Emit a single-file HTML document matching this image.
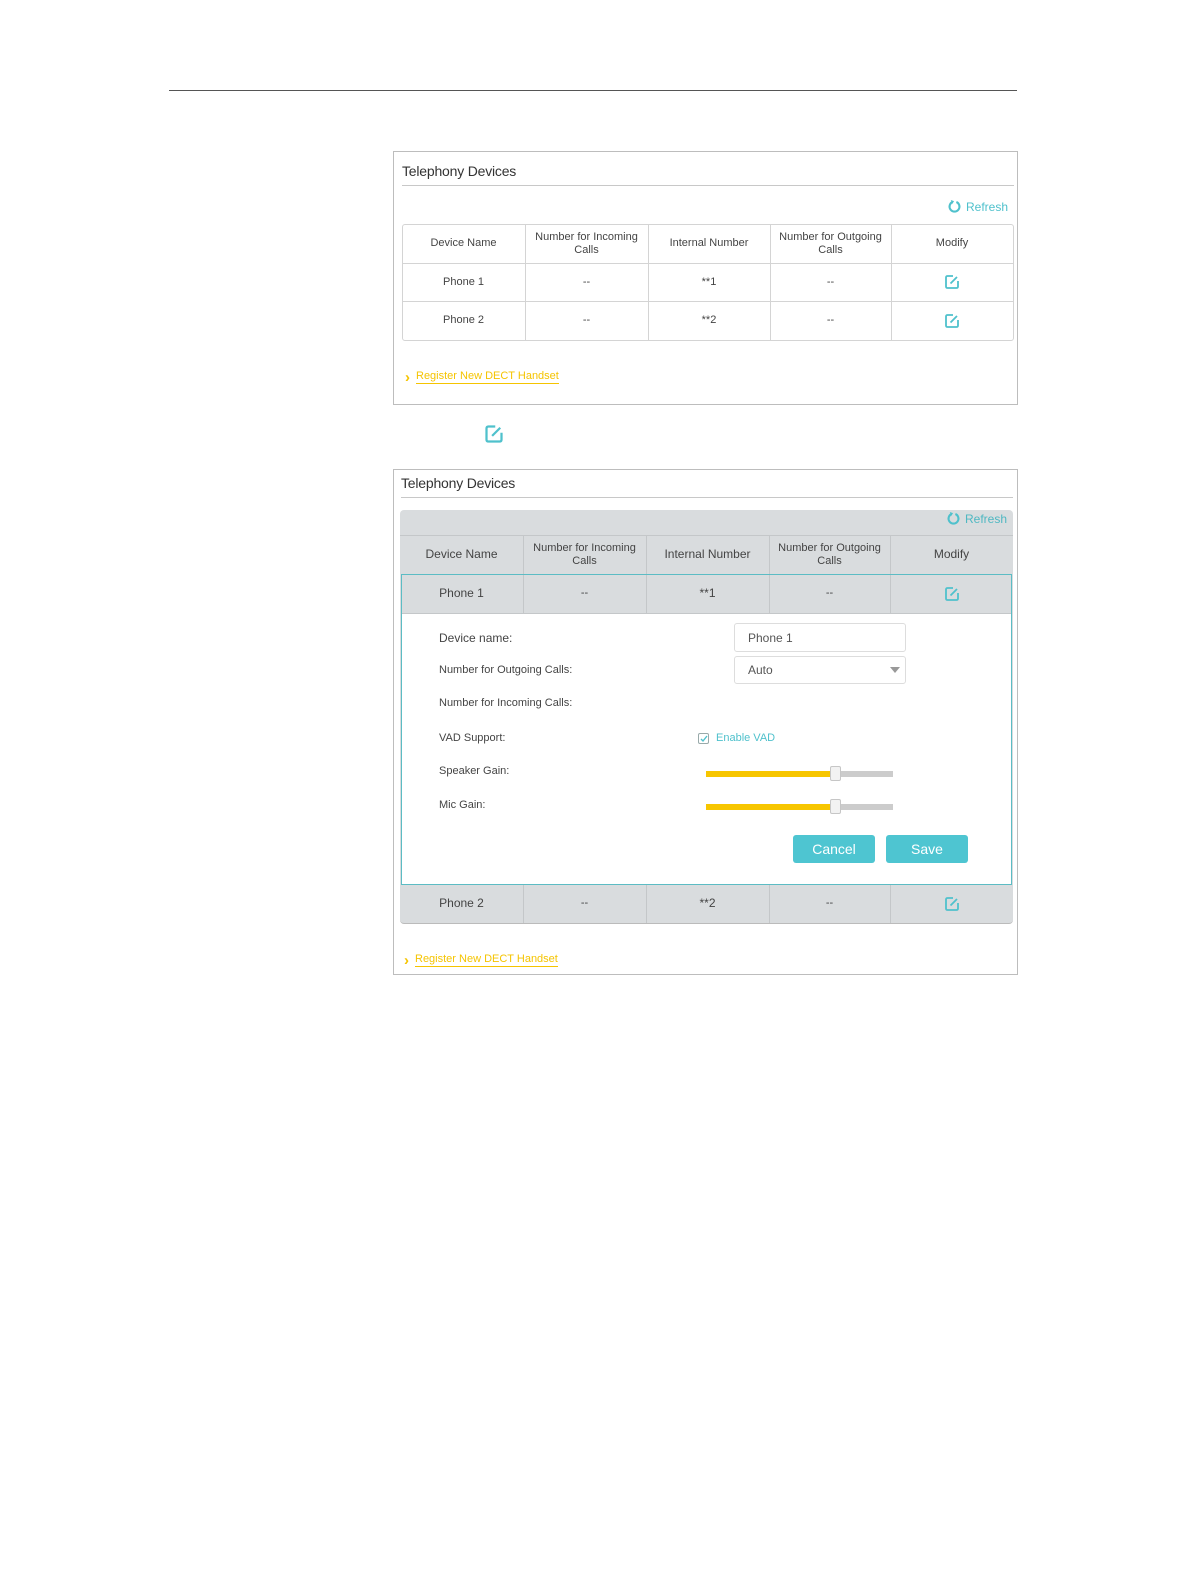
<!DOCTYPE html>
<html><head><meta charset="utf-8">
<style>
*{margin:0;padding:0;box-sizing:border-box}
body{width:1196px;height:1582px;background:#fff;position:relative;font-family:"Liberation Sans",Arial,sans-serif;color:#333;overflow:hidden}
.a{position:absolute}
.box{position:absolute;border:1px solid #bdbdbd;background:#fff}
.title{position:absolute;font-size:14px;color:#333;letter-spacing:-0.2px}
.ul{position:absolute;height:1px;background:#c8c8c8}
.ref{position:absolute;font-size:12px;color:#4fc1cc;display:flex;align-items:center;gap:4px}
.cell{position:absolute;display:flex;align-items:center;justify-content:center;text-align:center;font-size:11px;line-height:13px;color:#444}
.vl{position:absolute;width:1px;background:#d4d4d4}
.hl{position:absolute;height:1px;background:#d4d4d4}
.reg{position:absolute;font-size:11px;color:#f5c400;display:flex;align-items:center;gap:6px}
.reg b{font-size:15px;line-height:13px}
.reg span{border-bottom:1px solid #f5c400;line-height:13px}
.lbl{position:absolute;font-size:11px;color:#444}
.inp{position:absolute;border:1px solid #ddd;border-radius:3px;background:#fff;font-size:12px;color:#555;padding-left:13px;display:flex;align-items:center}
.btn{position:absolute;background:#4ec5d1;color:#fff;font-size:14px;border-radius:3px;display:flex;align-items:center;justify-content:center}
.track{position:absolute;height:6px;background:#ccc}
.fill{position:absolute;height:6px;background:#f7c600}
.knob{position:absolute;width:11px;height:15px;background:#f2f2f2;border:1px solid #c6c6c6;border-radius:2px}
</style></head><body>
<svg width="0" height="0" style="position:absolute"><defs>
<symbol id="ed" viewBox="0 0 16 16"><path d="M9 2H3.5Q2 2 2 3.5v9Q2 14 3.5 14h9q1.5 0 1.5-1.5V7" fill="none" stroke="#4fc1cc" stroke-width="1.8"/><path d="M6.5 9.5L13 3" stroke="#4fc1cc" stroke-width="1.8"/></symbol>
<symbol id="rf" viewBox="0 0 16 16"><path d="M6 3.2A5.3 5.3 0 1 0 10 3.2" fill="none" stroke="#4fc1cc" stroke-width="2.2"/><path d="M4 1l3.5 1.2-1.8 3z" fill="#4fc1cc"/></symbol>
</defs></svg>

<div class="a" style="left:169px;top:90px;width:848px;height:1px;background:#555"></div>

<div class="box" style="left:393px;top:151px;width:625px;height:254px"></div>
<div class="title" style="left:402px;top:163px">Telephony Devices</div>
<div class="ul" style="left:402px;top:185px;width:612px"></div>
<div class="ref" style="left:947px;top:199px"><svg width="15" height="15"><use href="#rf"/></svg>Refresh</div>
<div class="a" style="left:402px;top:224px;width:612px;height:117px;border:1px solid #d4d4d4;border-radius:3px"></div>
<div class="hl" style="left:402px;top:263px;width:612px"></div>
<div class="hl" style="left:402px;top:301px;width:612px"></div>
<div class="vl" style="left:525px;top:224px;height:117px"></div>
<div class="vl" style="left:648px;top:224px;height:117px"></div>
<div class="vl" style="left:770px;top:224px;height:117px"></div>
<div class="vl" style="left:891px;top:224px;height:117px"></div>
<div class="cell" style="left:402px;top:224px;width:123px;height:39px">Device Name</div>
<div class="cell" style="left:525px;top:224px;width:123px;height:39px">Number for Incoming<br>Calls</div>
<div class="cell" style="left:648px;top:224px;width:122px;height:39px">Internal Number</div>
<div class="cell" style="left:770px;top:224px;width:121px;height:39px">Number for Outgoing<br>Calls</div>
<div class="cell" style="left:891px;top:224px;width:122px;height:39px">Modify</div>
<div class="cell" style="left:402px;top:263px;width:123px;height:38px">Phone 1</div>
<div class="cell" style="left:525px;top:263px;width:123px;height:38px">--</div>
<div class="cell" style="left:648px;top:263px;width:122px;height:38px">**1</div>
<div class="cell" style="left:770px;top:263px;width:121px;height:38px">--</div>
<div class="cell" style="left:891px;top:263px;width:122px;height:38px"><svg width="16" height="16"><use href="#ed"/></svg></div>
<div class="cell" style="left:402px;top:301px;width:123px;height:39px">Phone 2</div>
<div class="cell" style="left:525px;top:301px;width:123px;height:39px">--</div>
<div class="cell" style="left:648px;top:301px;width:122px;height:39px">**2</div>
<div class="cell" style="left:770px;top:301px;width:121px;height:39px">--</div>
<div class="cell" style="left:891px;top:301px;width:122px;height:39px"><svg width="16" height="16"><use href="#ed"/></svg></div>
<div class="reg" style="left:405px;top:370px"><b>›</b><span>Register New DECT Handset</span></div>

<svg class="a" style="left:484px;top:424px" width="20" height="20"><use href="#ed"/></svg>

<div class="box" style="left:393px;top:469px;width:625px;height:506px"></div>
<div class="title" style="left:401px;top:475px">Telephony Devices</div>
<div class="ul" style="left:401px;top:497px;width:612px"></div>
<div class="a" style="left:400px;top:510px;width:613px;height:414px;background:#d9dcde;border-radius:4px;border-bottom:1px solid #bbb"></div>
<div class="ref" style="left:946px;top:511px;color:#4fb8c2"><svg width="15" height="15"><use href="#rf"/></svg>Refresh</div>
<div class="hl" style="left:400px;top:535px;width:613px;background:#c4c7c9"></div>
<div class="vl" style="left:523px;top:535px;height:39px;background:#c4c7c9"></div>
<div class="vl" style="left:646px;top:535px;height:39px;background:#c4c7c9"></div>
<div class="vl" style="left:769px;top:535px;height:39px;background:#c4c7c9"></div>
<div class="vl" style="left:890px;top:535px;height:39px;background:#c4c7c9"></div>
<div class="cell" style="left:400px;top:535px;width:123px;height:39px;font-size:12px">Device Name</div>
<div class="cell" style="left:523px;top:535px;width:123px;height:39px">Number for Incoming<br>Calls</div>
<div class="cell" style="left:646px;top:535px;width:123px;height:39px;font-size:12px">Internal Number</div>
<div class="cell" style="left:769px;top:535px;width:121px;height:39px">Number for Outgoing<br>Calls</div>
<div class="cell" style="left:890px;top:535px;width:123px;height:39px;font-size:12px">Modify</div>
<div class="a" style="left:401px;top:574px;width:611px;height:311px;border:1px solid #5cbcc4"></div>
<div class="a" style="left:402px;top:613px;width:609px;height:271px;background:#fff;border-top:1px solid #c4c7c9"></div>
<div class="vl" style="left:523px;top:575px;height:38px;background:#c4c7c9"></div>
<div class="vl" style="left:646px;top:575px;height:38px;background:#c4c7c9"></div>
<div class="vl" style="left:769px;top:575px;height:38px;background:#c4c7c9"></div>
<div class="vl" style="left:890px;top:575px;height:38px;background:#c4c7c9"></div>
<div class="cell" style="left:400px;top:574px;width:123px;height:39px;font-size:12px">Phone 1</div>
<div class="cell" style="left:523px;top:574px;width:123px;height:39px">--</div>
<div class="cell" style="left:646px;top:574px;width:123px;height:39px;font-size:12px">**1</div>
<div class="cell" style="left:769px;top:574px;width:121px;height:39px">--</div>
<div class="cell" style="left:890px;top:574px;width:123px;height:39px"><svg width="16" height="16"><use href="#ed"/></svg></div>

<div class="lbl" style="left:439px;top:631px;font-size:12px">Device name:</div>
<div class="lbl" style="left:439px;top:664px">Number for Outgoing Calls:</div>
<div class="lbl" style="left:439px;top:697px">Number for Incoming Calls:</div>
<div class="lbl" style="left:439px;top:732px">VAD Support:</div>
<div class="lbl" style="left:439px;top:765px">Speaker Gain:</div>
<div class="lbl" style="left:439px;top:799px">Mic Gain:</div>
<div class="inp" style="left:734px;top:623px;width:172px;height:29px">Phone 1</div>
<div class="inp" style="left:734px;top:656px;width:172px;height:28px">Auto</div>
<div class="a" style="left:890px;top:667px;width:0;height:0;border-left:5px solid transparent;border-right:5px solid transparent;border-top:6px solid #999"></div>
<div class="a" style="left:698px;top:733px;width:11px;height:11px;border:1px solid #9aa;border-radius:2px"></div>
<svg class="a" style="left:699px;top:734px" width="10" height="10"><path d="M2 5l2 2 4-5" fill="none" stroke="#4fc1cc" stroke-width="1.4"/></svg>
<div class="lbl" style="left:716px;top:732px;color:#4fc1cc">Enable VAD</div>
<div class="track" style="left:706px;top:771px;width:187px"></div>
<div class="fill" style="left:706px;top:771px;width:127px"></div>
<div class="knob" style="left:830px;top:766px"></div>
<div class="track" style="left:706px;top:804px;width:187px"></div>
<div class="fill" style="left:706px;top:804px;width:127px"></div>
<div class="knob" style="left:830px;top:799px"></div>
<div class="btn" style="left:793px;top:835px;width:82px;height:28px">Cancel</div>
<div class="btn" style="left:886px;top:835px;width:82px;height:28px">Save</div>

<div class="vl" style="left:523px;top:885px;height:38px;background:#c4c7c9"></div>
<div class="vl" style="left:646px;top:885px;height:38px;background:#c4c7c9"></div>
<div class="vl" style="left:769px;top:885px;height:38px;background:#c4c7c9"></div>
<div class="vl" style="left:890px;top:885px;height:38px;background:#c4c7c9"></div>
<div class="cell" style="left:400px;top:884px;width:123px;height:39px;font-size:12px">Phone 2</div>
<div class="cell" style="left:523px;top:884px;width:123px;height:39px">--</div>
<div class="cell" style="left:646px;top:884px;width:123px;height:39px;font-size:12px">**2</div>
<div class="cell" style="left:769px;top:884px;width:121px;height:39px">--</div>
<div class="cell" style="left:890px;top:884px;width:123px;height:39px"><svg width="16" height="16"><use href="#ed"/></svg></div>
<div class="reg" style="left:404px;top:953px"><b>›</b><span>Register New DECT Handset</span></div>
</body></html>
